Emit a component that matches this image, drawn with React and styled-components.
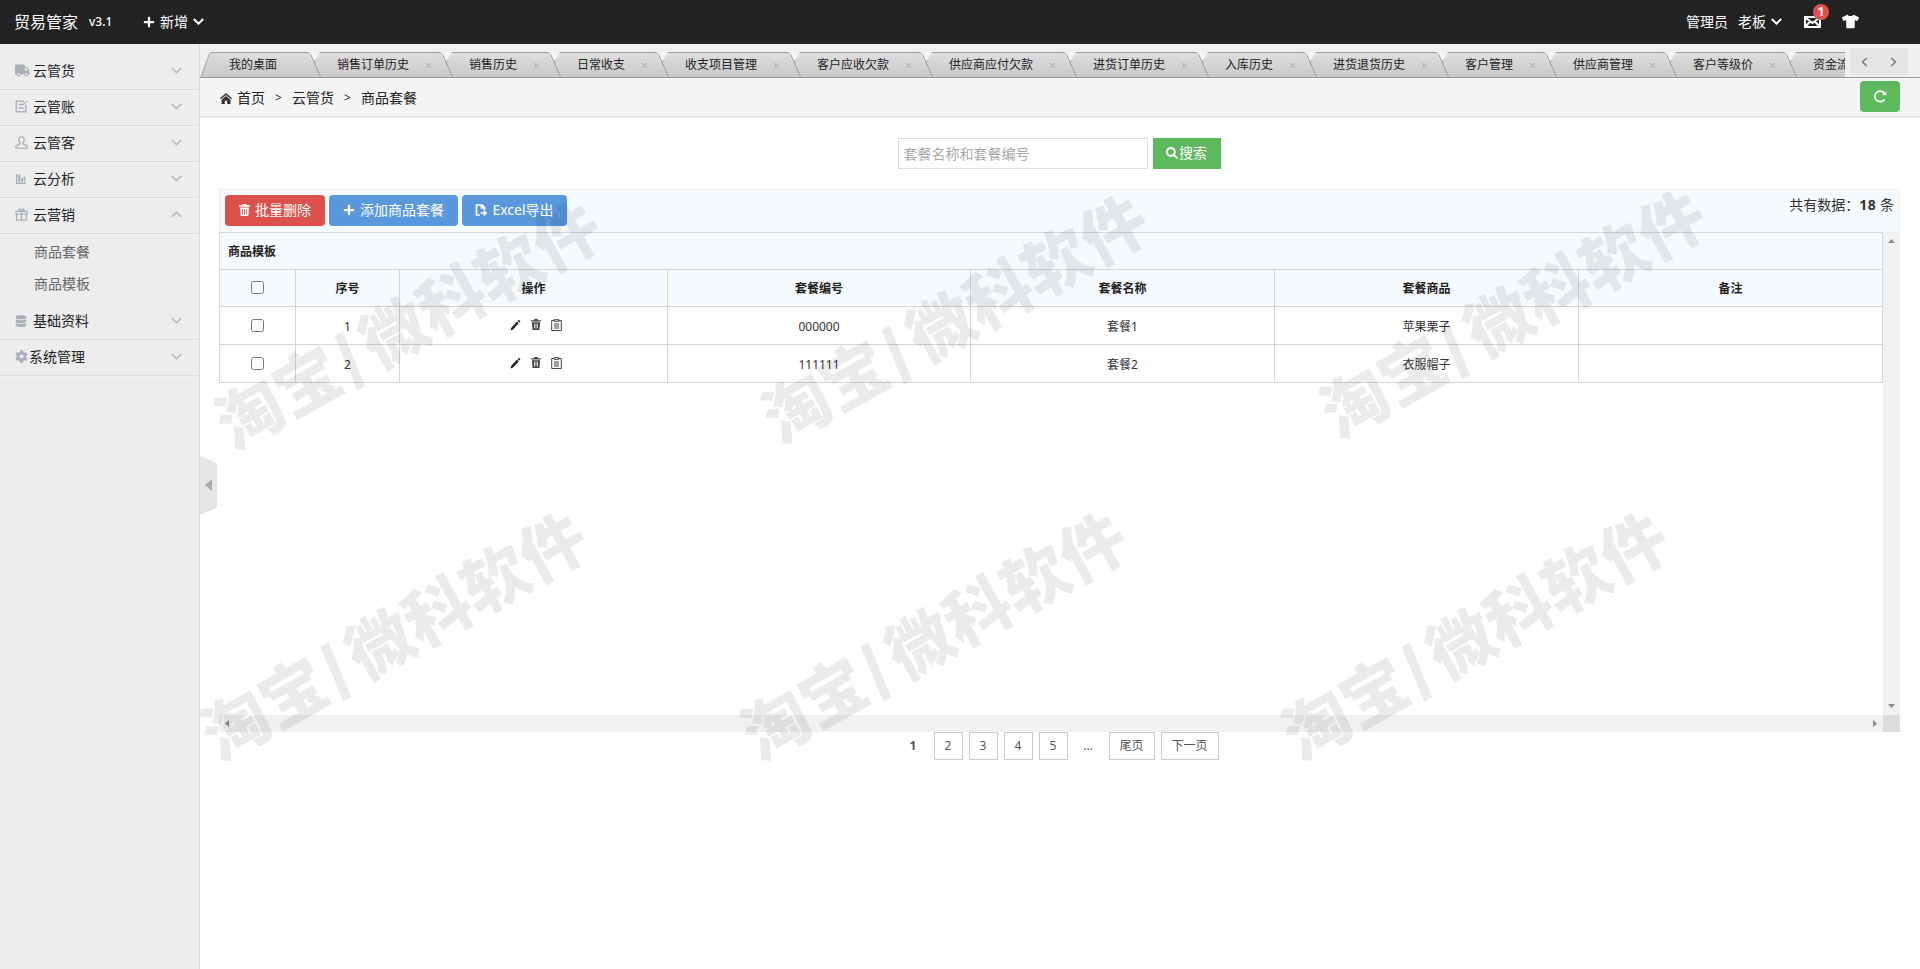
import React from 'react';
import styled, { createGlobalStyle, css } from 'styled-components';
import { FaTruck, FaDatabase, FaCog, FaPlus, FaTshirt, FaSearch } from 'react-icons/fa';

const GlobalStyle = createGlobalStyle`
  * { box-sizing: border-box; }
  html, body, #root { height: 100%; }
  body {
    margin: 0;
    overflow: hidden;
    background: #fff;
    color: #333;
    font-family: "Noto Sans", "Noto Sans CJK SC", sans-serif;
    font-size: 14px;
    line-height: 20px;
  }
`;

const Page = styled.div`
  display: flex;
  flex-direction: column;
  height: 969px;
  width: 1920px;
  position: relative;
  overflow: hidden;
`;

const Header = styled.header`
  display: flex;
  align-items: center;
  flex: none;
  height: 44px;
  padding: 0 61px 1px 14px;
  background: #222;
  color: #fff;
`;

const Logo = styled.span`
  width: 75px;
  font-size: 16px;
`;

const Version = styled.span`
  width: 54px;
  font-size: 12px;
  font-weight: 500;
`;

const HeaderMenu = styled.a`
  display: flex;
  align-items: center;
  gap: 5px;
  white-space: nowrap;
`;

const HeaderRight = styled.div`
  display: flex;
  align-items: center;
  margin-left: auto;
`;

const RoleName = styled.span`
  margin-right: 10px;
`;

const MailBox = styled.div`
  position: relative;
  display: flex;
  margin: 0 21px 0 22px;
`;

const Badge = styled.span`
  position: absolute;
  top: -12px;
  left: 9px;
  width: 16px;
  height: 16px;
  border-radius: 50%;
  background: #dd514c;
  font-size: 12px;
  font-weight: 700;
  line-height: 16px;
  text-align: center;
`;

const Body = styled.div`
  display: flex;
  flex: 1;
  min-height: 0;
`;

const Sidebar = styled.aside`
  flex: none;
  width: 200px;
  padding-top: 10px;
  background: #ededed;
  border-right: 1px solid #dcdcdc;
`;

const MenuItem = styled.div`
  display: flex;
  align-items: center;
  height: 36px;
  padding: 0 17px 2px 15px;
  color: #222;
  border-bottom: 1px solid #dcdcdc;
  box-shadow: 0 1px 0 #f3f3f3;
`;

const MenuIcon = styled.span`
  display: flex;
  align-items: center;
  width: ${({ $tight }) => ($tight ? '14px' : '18px')};
  color: #a9b0b8;
`;

const MenuArrow = styled.span`
  display: flex;
  margin-left: auto;
  color: #b4b4b4;
`;

const SubMenu = styled.div`
  height: 70px;
  padding: 2px 0 0 34px;
  color: #666;
`;

const SubItem = styled.div`
  height: 32px;
  line-height: 32px;
`;

const Main = styled.main`
  position: relative;
  display: flex;
  flex-direction: column;
  flex: 1;
  min-width: 0;
`;

const TabBar = styled.nav`
  display: flex;
  height: 34px;
  padding-top: 8px;
  background: #efefef;
  border-bottom: 1px solid #999;
`;

const TabList = styled.div`
  display: flex;
  width: 1645px;
  overflow: hidden;
`;

const Tab = styled.div`
  position: relative;
  z-index: ${({ $order }) => 20 - $order};
  display: flex;
  flex: none;
  height: 25px;
  margin-right: -14px;
`;

const TabLabel = styled.div`
  display: flex;
  align-items: center;
  justify-content: space-between;
  width: ${({ $chars }) => $chars * 12 + 36}px;
  padding: 0 3px 0 10px;
  margin: 0 -1px;
  border-top: 1px solid #a0a0a0;
  background: linear-gradient(#dedede, #c9c9c9);
  font-size: 12px;
  line-height: 22px;
  white-space: nowrap;
  color: #222;
`;

const TabNav = styled.div`
  display: flex;
  align-items: center;
  justify-content: space-around;
  width: 58px;
  height: 27px;
  margin: -4px 0 0 5px;
  background: #e5e5e5;
  color: #777;
`;

const Breadcrumb = styled.div`
  display: flex;
  align-items: center;
  flex: none;
  height: 40px;
  padding: 2px 20px 0 20px;
  background: #f5f5f5;
  border-bottom: 2px solid #e8e8e8;
  color: #222;
`;

const Crumb = styled.span`
  margin-left: 5px;
`;

const CrumbSep = styled.span`
  width: 27px;
  text-align: center;
  font-size: 12px;
`;

const Button = styled.button`
  display: flex;
  align-items: center;
  justify-content: center;
  gap: ${({ $gap = 5 }) => $gap}px;
  width: ${({ $width }) => $width}px;
  height: 31px;
  padding: 0 0 1px;
  border: 0;
  border-radius: ${({ $square }) => ($square ? 0 : 4)}px;
  color: #fff;
  font: inherit;
  white-space: nowrap;
  ${({ $kind }) => $kind === 'success' && css`background: #5eb95e;`}
  ${({ $kind }) => $kind === 'danger' && css`background: #dd514c;`}
  ${({ $kind }) => $kind === 'primary' && css`background: #5a98de;`}
`;

const RefreshWrap = styled.div`
  margin: -4px 0 0 auto;
`;

const Content = styled.section`
  display: flex;
  flex-direction: column;
  padding: 20px 20px 0 19px;
`;

const SearchBar = styled.div`
  display: flex;
  justify-content: center;
  gap: 5px;
  padding-right: 1px;
`;

const SearchInput = styled.input`
  width: 250px;
  height: 31px;
  padding: 0 5px;
  border: 1px solid #ddd;
  outline: 0;
  font: inherit;
  &::placeholder { color: #a9a9a9; }
`;

const Toolbar = styled.div`
  display: flex;
  height: 43px;
  margin-top: 20px;
  padding: 5px 5px 0;
  gap: 4px;
  background: #f5fafe;
  border: 1px solid #eee;
  border-bottom: 0;
`;

const Total = styled.div`
  margin: 0 0 0 auto;
  strong {
    font-weight: 700;
    letter-spacing: .5px;
  }
`;

const ScrollArea = styled.div`
  display: grid;
  grid-template-columns: 1664px 17px;
  grid-template-rows: 483px 17px;
`;

const ScrollTrack = styled.div`
  display: flex;
  flex-direction: ${({ $vertical }) => ($vertical ? 'column' : 'row')};
  align-items: center;
  justify-content: space-between;
  padding: ${({ $vertical }) => ($vertical ? '7px 0' : '0 6px')};
  background: #f1f1f1;
`;

const ScrollCorner = styled.div`
  background: #dcdcdc;
`;

const Table = styled.table`
  width: 1664px;
  table-layout: fixed;
  border-collapse: separate;
  border-spacing: 0;
  border-top: 1px solid #d5d5d5;
  border-left: 1px solid #d5d5d5;
  font-size: 12px;
  line-height: 18px;
`;

const Col = styled.col`
  width: ${({ $width }) => $width}px;
`;

const Th = styled.th`
  height: 37px;
  padding: 1px 8px 0;
  text-align: ${({ $left }) => ($left ? 'left' : 'center')};
  font-weight: 600;
  color: #222;
  background: #f5fafe;
  border-right: 1px solid #d5d5d5;
  border-bottom: 1px solid #d5d5d5;
`;

const Td = styled.td`
  height: 38px;
  padding: 2px 8px 0;
  text-align: center;
  border-right: 1px solid #d5d5d5;
  border-bottom: 1px solid #d5d5d5;
`;

const Check = styled.input`
  display: block;
  width: 13px;
  height: 13px;
  margin: -3px auto 0;
`;

const Actions = styled.div`
  display: flex;
  align-items: center;
  justify-content: center;
  gap: 10px;
  margin: -4px 0 0 4px;
`;

const Pager = styled.div`
  display: flex;
  justify-content: center;
  gap: 6px;
  padding-right: 2px;
  font-size: 12px;
`;

const PageLink = styled.a`
  width: ${({ $width = 29 }) => $width}px;
  height: 28px;
  line-height: 26px;
  text-align: center;
  color: #555;
  border: 1px solid ${({ $plain }) => ($plain ? 'transparent' : '#ccc')};
  font-weight: ${({ $current }) => ($current ? 700 : 400)};
`;

const Handle = styled.div`
  position: absolute;
  top: 412px;
  left: 0;
  display: flex;
`;

const Watermark = styled.div`
  position: absolute;
  left: ${({ $x }) => $x}px;
  top: ${({ $y }) => $y}px;
  transform: translate(-50%, -50%) rotate(-29.3deg);
  font-family: "Noto Sans CJK SC", sans-serif;
  font-size: 66px;
  font-weight: 900;
  line-height: 80px;
  white-space: nowrap;
  color: rgba(0, 0, 0, 0.08);
  pointer-events: none;
  z-index: 50;
`;

const Slash = styled.span`
  display: inline-block;
  margin: 0 7px 0 1px;
  transform: skewX(10deg) scale(1.2, .9);
`;

const Svg = ({ w, h = w, box = `0 0 ${w} ${h}`, children, ...rest }) => (
    <svg width={w} height={h} viewBox={box} fill="none" stroke="currentColor" {...rest}>{children}</svg>
);

const Chevron = ({ d = 'M.8 1 5.5 5.7 10.2 1', w = 11, h = 7, ...rest }) => (
    <Svg w={w} h={h} strokeWidth="1.5" {...rest}><path d={d} /></Svg>
);

const EditIcon = () => (
    <Svg w={13} strokeWidth="1.4">
        <path d="M9 1.2H1.2v10.6h9.6V4.5M3.5 4.5h4M3.5 8h5M7.5 5l4.5-4" />
    </Svg>
);

const UserIcon = () => (
    <Svg w={13} strokeWidth="1.3">
        <path d="M6.5.8c-1.8 0-2.7 1.2-2.7 2.8 0 1.500.6 2.600 1.300 3.300L4.600 8.200 1.100 9.600.7 12.200h11.600l-.4-2.600-3.500-1.400-.5-1.300c.7-.7 1.300-1.800 1.300-3.300C9.200 2 8.300.8 6.500.8Z" />
    </Svg>
);

const ChartIcon = () => (
    <Svg w={12} h={11}>
        <path stroke="none" fill="currentColor" d="M1 1h1.300v8.500H11V11H1ZM3.300 1.500h2.200v7.200H3.300ZM6.200 5h1.800v3.700H6.200ZM8.700 3.500h1.800v5.200H8.700Z" />
    </Svg>
);

const GiftIcon = () => (
    <Svg w={13} strokeWidth="1.2">
        <path d="M.9 3.400h11.200v2.800H.9ZM1.700 6.200h9.600v5.900H1.700ZM6.500 3.400v8.700M6.500 3.200C5 3.200 3.400 2.400 4 1.300 4.800.2 6.300 1.500 6.500 3.200 6.700 1.500 8.200.2 9 1.300c.6 1.100-1 1.900-2.500 1.900Z" />
    </Svg>
);

const HomeIcon = () => (
    <Svg w={12} h={11} stroke="none" fill="#333">
        <path d="M6 0 12 5.300l-1 1L6 2 1 6.300l-1-1ZM6 3l4.500 3.900V11H7.200V7.800H4.800V11H1.500V6.900Z" />
    </Svg>
);

const MailIcon = () => (
    <Svg w={17} h={12} strokeWidth="2">
        <path d="M1 1h15v10H1ZM2 2l6.500 5L15 2M2 10l4-4.500M15 10l-4-4.500" />
    </Svg>
);

const TrashIcon = ({ size = 11, dark }) => (
    <Svg w={size} h={size + 1} box="0 0 11 12" stroke="none" fill={dark ? '#444' : '#fff'}>
        <path fillRule="evenodd" d="M3.500 0h4v1.300H11v1.500H0V1.300h3.500ZM1 3.500h9L9.300 12H1.700ZM3.300 5v5.500h.8V5ZM5.100 5v5.500h.8V5ZM6.900 5v5.500h.8V5Z" />
    </Svg>
);

const PencilIcon = () => (
    <Svg w={11} h={12} stroke="none" fill="#222">
        <path d="M8.700.7 10.500 2.300 9.400 3.500 7.600 1.900ZM7 2.600l1.800 1.600-5.700 6.200L.5 11.500l.8-2.700Z" />
    </Svg>
);

const ClipboardIcon = () => (
    <Svg w={11} h={12} stroke="#444">
        <path d="M3 1.500H.7v10h9.600v-10H8M3 .7h5v1.600H3ZM3 5h5M3 7h5M3 9h5" />
    </Svg>
);

const ExportIcon = () => (
    <Svg w={12} h={12} strokeWidth="1.7">
        <path d="M4.800 11H1.500V1H7l2.500 2.500V6M6.500 1v3h3M5.500 9h5M8.700 6.800 11 9l-2.300 2.300" />
    </Svg>
);

const RefreshIcon = () => (
    <Svg w={14} strokeWidth="1.700">
        <path d="M11.500 10.300A5.300 5.300 0 1 1 12 5.500" />
        <path d="m8.800 5.800 4.500.6.200-4Z" fill="#fff" stroke="none" />
    </Svg>
);

const Arrow = ({ d, w, h }) => <Svg w={w} h={h} stroke="none" fill="#8d8d8d"><path d={d} /></Svg>;

const tabs = [
    '我的桌面', '销售订单历史', '销售历史', '日常收支', '收支项目管理', '客户应收欠款', '供应商应付欠款',
    '进货订单历史', '入库历史', '进货退货历史', '客户管理', '供应商管理', '客户等级价', '资金流水',
];

const menus = [
    { name: '云管货', icon: <FaTruck size={15} /> },
    { name: '云管账', icon: <EditIcon /> },
    { name: '云管客', icon: <UserIcon /> },
    { name: '云分析', icon: <ChartIcon /> },
    { name: '云营销', icon: <GiftIcon />, children: ['商品套餐', '商品模板'] },
    { name: '基础资料', icon: <FaDatabase size={12} /> },
    { name: '系统管理', icon: <FaCog size={13} />, tight: true },
];

const columns = ['序号', '操作', '套餐编号', '套餐名称', '套餐商品', '备注'];
const widths = [76, 104, 268, 303, 304, 304, 304];

const rows = [
    { id: 1, code: '000000', name: '套餐1', goods: '苹果栗子' },
    { id: 2, code: '111111', name: '套餐2', goods: '衣服帽子' },
];

const watermarks = [[406, 321], [953, 315], [1511, 310], [392, 632], [932, 632], [1473, 632]];

function TabItem({ title, index }) {
    return (
        <Tab $order={index}>
            <svg width="20" height="25">
                <defs>
                    <linearGradient id={`tab${index}`} x2="0" y2="1">
                        <stop stopColor="#dedede" />
                        <stop offset="1" stopColor="#c9c9c9" />
                    </linearGradient>
                </defs>
                <path d="M1 25 9 3Q10 .5 12 .5H20V25Z" fill={`url(#tab${index})`} />
                <path d="M1 25 9 3Q10 .5 12 .5H20" fill="none" stroke="#a0a0a0" />
            </svg>
            <TabLabel $chars={title.length}>
                {title}
                {index > 0 && <Svg w={7} stroke="#aaa"><path d="m1 1 5 5M6 1 1 6" /></Svg>}
            </TabLabel>
            <svg width="20" height="25">
                <path d="M0 .5H4Q6 .5 7.500 3L19 25H0Z" fill={`url(#tab${index})`} />
                <path d="M6 0H18L13 9Z" fill="#f3f3f3" />
                <path d="M0 .5H5Q7.500 .5 9 3.500L12 10 18.500 25" fill="none" stroke="#999" />
            </svg>
        </Tab>
    );
}

function App() {
    return (
        <Page>
            <GlobalStyle />
            <Header>
                <Logo>贸易管家</Logo>
                <Version>v3.1</Version>
                <HeaderMenu><FaPlus size={12} />新增 <Chevron strokeWidth="2" /></HeaderMenu>
                <HeaderRight>
                    <RoleName>管理员</RoleName>
                    <HeaderMenu>老板 <Chevron strokeWidth="2" /></HeaderMenu>
                    <MailBox><MailIcon /><Badge>1</Badge></MailBox>
                    <FaTshirt size={17} />
                </HeaderRight>
            </Header>
            <Body>
                <Sidebar>
                    {menus.map((menu) => (
                        <React.Fragment key={menu.name}>
                            <MenuItem>
                                <MenuIcon $tight={menu.tight}>{menu.icon}</MenuIcon>
                                {menu.name}
                                <MenuArrow>
                                    <Chevron d={menu.children ? 'M.8 6 5.500 1.300 10.200 6' : undefined} />
                                </MenuArrow>
                            </MenuItem>
                            {menu.children && (
                                <SubMenu>{menu.children.map((sub) => <SubItem key={sub}>{sub}</SubItem>)}</SubMenu>
                            )}
                        </React.Fragment>
                    ))}
                </Sidebar>
                <Main>
                    <TabBar>
                        <TabList>{tabs.map((title, i) => <TabItem key={title} title={title} index={i} />)}</TabList>
                        <TabNav>
                            <Chevron w={7} h={10} d="M5.700 1 1.500 5l4.200 4" />
                            <Chevron w={7} h={10} d="M1.300 1 5.500 5 1.300 9" />
                        </TabNav>
                    </TabBar>
                    <Breadcrumb>
                        <HomeIcon />
                        <Crumb>首页</Crumb>
                        <CrumbSep>&gt;</CrumbSep>
                        <span>云管货</span>
                        <CrumbSep>&gt;</CrumbSep>
                        <span>商品套餐</span>
                        <RefreshWrap><Button $kind="success" $width={40}><RefreshIcon /></Button></RefreshWrap>
                    </Breadcrumb>
                    <Content>
                        <SearchBar>
                            <SearchInput placeholder="套餐名称和套餐编号" />
                            <Button $kind="success" $width={68} $gap={1} $square><FaSearch size={12} />搜索</Button>
                        </SearchBar>
                        <Toolbar>
                            <Button $kind="danger" $width={100}><TrashIcon />批量删除</Button>
                            <Button $kind="primary" $width={129}><FaPlus size={12} />添加商品套餐</Button>
                            <Button $kind="primary" $width={105}><ExportIcon />Excel导出</Button>
                            <Total>共有数据：<strong>18</strong> 条</Total>
                        </Toolbar>
                        <ScrollArea>
                            <div>
                                <Table>
                                    <colgroup>{widths.map((w, i) => <Col key={i} $width={w} />)}</colgroup>
                                    <thead>
                                        <tr><Th colSpan={7} $left>商品模板</Th></tr>
                                        <tr>
                                            <Th><Check type="checkbox" /></Th>
                                            {columns.map((name) => <Th key={name}>{name}</Th>)}
                                        </tr>
                                    </thead>
                                    <tbody>
                                        {rows.map((row) => (
                                            <tr key={row.id}>
                                                <Td><Check type="checkbox" /></Td>
                                                <Td>{row.id}</Td>
                                                <Td>
                                                    <Actions><PencilIcon /><TrashIcon size={10} dark /><ClipboardIcon /></Actions>
                                                </Td>
                                                <Td>{row.code}</Td>
                                                <Td>{row.name}</Td>
                                                <Td>{row.goods}</Td>
                                                <Td />
                                            </tr>
                                        ))}
                                    </tbody>
                                </Table>
                            </div>
                            <ScrollTrack $vertical>
                                <Arrow w={7} h={4} d="M0 4 3.500 0 7 4Z" />
                                <Arrow w={7} h={4} d="M0 0 3.500 4 7 0Z" />
                            </ScrollTrack>
                            <ScrollTrack>
                                <Arrow w={4} h={7} d="M4 0 0 3.500 4 7Z" />
                                <Arrow w={4} h={7} d="M0 0 4 3.500 0 7Z" />
                            </ScrollTrack>
                            <ScrollCorner />
                        </ScrollArea>
                        <Pager>
                            <PageLink $plain $current>1</PageLink>
                            {[2, 3, 4, 5].map((n) => <PageLink key={n}>{n}</PageLink>)}
                            <PageLink $plain>...</PageLink>
                            <PageLink $width={46}>尾页</PageLink>
                            <PageLink $width={58}>下一页</PageLink>
                        </Pager>
                    </Content>
                    <Handle>
                        <Svg w={17} h={59} stroke="none">
                            <path d="M0 0 15 6Q17 7 17 9V50Q17 52 15 53L0 59Z" fill="#e6e6e6" />
                            <path d="M12 23V35L5 29Z" fill="#aaa" />
                        </Svg>
                    </Handle>
                </Main>
            </Body>
            {watermarks.map(([x, y]) => (
                <Watermark key={`${x}-${y}`} $x={x} $y={y}>淘宝<Slash>/</Slash>微科软件</Watermark>
            ))}
        </Page>
    );
}

export default App;
